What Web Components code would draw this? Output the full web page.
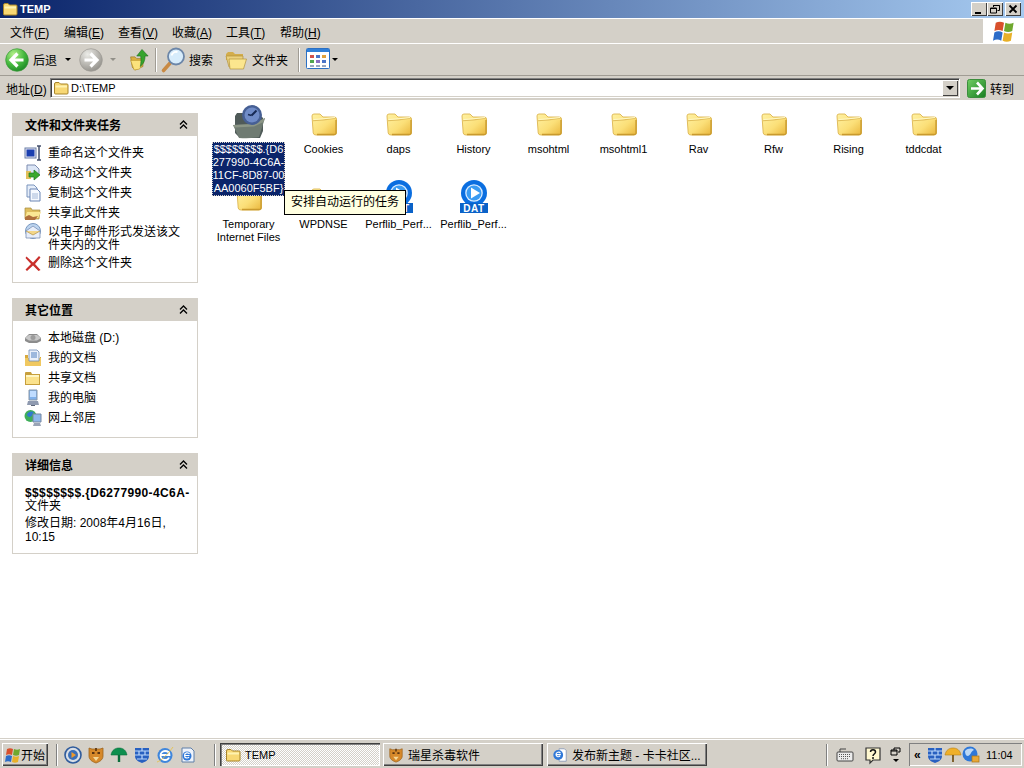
<!DOCTYPE html>
<html lang="zh">
<head>
<meta charset="utf-8">
<title>TEMP</title>
<style>
html, body { margin: 0; height: 100%; overflow: hidden; }
body { font: 12px "Liberation Sans", "Noto Sans CJK SC", sans-serif; color: #000; background: #d4d0c8; }
u { text-decoration: underline; }
</style>
</head>
<body>
<win-explorer>
  <win-titlebar slot="title">TEMP</win-titlebar>
  <win-menubar slot="menu">
    <menu-item>文件(<u>F</u>)</menu-item>
    <menu-item>编辑(<u>E</u>)</menu-item>
    <menu-item>查看(<u>V</u>)</menu-item>
    <menu-item>收藏(<u>A</u>)</menu-item>
    <menu-item>工具(<u>T</u>)</menu-item>
    <menu-item>帮助(<u>H</u>)</menu-item>
  </win-menubar>
  <win-toolbar slot="tools"></win-toolbar>
  <win-address slot="address"></win-address>
  <task-sidebar slot="side">
    <task-panel heading="文件和文件夹任务" style="height:170px">
      <task-link icon="rename">重命名这个文件夹</task-link>
      <task-link icon="move">移动这个文件夹</task-link>
      <task-link icon="copy">复制这个文件夹</task-link>
      <task-link icon="share">共享此文件夹</task-link>
      <task-link icon="mail" tall>以电子邮件形式发送该文件夹内的文件</task-link>
      <task-link icon="del">删除这个文件夹</task-link>
    </task-panel>
    <task-panel heading="其它位置" style="height:140px">
      <task-link icon="drive">本地磁盘 (D:)</task-link>
      <task-link icon="docs">我的文档</task-link>
      <task-link icon="shared">共享文档</task-link>
      <task-link icon="pc">我的电脑</task-link>
      <task-link icon="net">网上邻居</task-link>
    </task-panel>
    <task-panel heading="详细信息" style="height:101px">
      <detail-info></detail-info>
    </task-panel>
  </task-sidebar>
  <file-grid slot="files">
    <file-item icon="tasks" selected>$$$$$$$$.{D6<br>277990-4C6A-<br>11CF-8D87-00<br>AA0060F5BF}</file-item>
    <file-item icon="folder">Cookies</file-item>
    <file-item icon="folder">daps</file-item>
    <file-item icon="folder">History</file-item>
    <file-item icon="folder">msohtml</file-item>
    <file-item icon="folder">msohtml1</file-item>
    <file-item icon="folder">Rav</file-item>
    <file-item icon="folder">Rfw</file-item>
    <file-item icon="folder">Rising</file-item>
    <file-item icon="folder">tddcdat</file-item>
    <file-item icon="folder">Temporary<br>Internet Files</file-item>
    <file-item icon="folder">WPDNSE</file-item>
    <file-item icon="dat">Perflib_Perf...</file-item>
    <file-item icon="dat">Perflib_Perf...</file-item>
    <win-tooltip>安排自动运行的任务</win-tooltip>
  </file-grid>
  <win-taskbar slot="taskbar"></win-taskbar>
</win-explorer>

<script>
const FONT = '"Liberation Sans", "Noto Sans CJK SC", sans-serif';

const smallFolder = `
  <path d="M1.500 4Q1.500 2.500 3 2.500H6L7.500 4H14Q15 4 15 5V13Q15 14 14 14H2.500Q1.500 14 1.500 13z" fill="#f8d874" stroke="#a88428"/>
  <path d="M2.500 6.500H14" stroke="#fff2b0" stroke-width="2"/>`;

const ICONS = {
  folder: [32, `
    <defs><linearGradient id="f" x1="0" y1="0" x2="1" y2="1"><stop offset="0" stop-color="#fff2a4"/><stop offset=".55" stop-color="#fbdf78"/><stop offset="1" stop-color="#e9b63c"/></linearGradient></defs>
    <g transform="translate(-1 0)">
      <path d="M5 9Q5 7 7 7H13L16 10H27Q29.500 10 29.500 12V26Q29.500 28 27 28H9Q6.500 28 6.200 26z" fill="url(#f)" stroke="#dcb650" stroke-width=".9"/>
      <path d="M6 13.800Q16 13.300 28.500 11.300" fill="none" stroke="#e2bf5c" stroke-width="1.100"/>
      <path d="M6.500 12.500Q16 12 28 10.500" fill="none" stroke="#fff8c8" stroke-width="1.200"/>
      <path d="M29 13V26Q29 27.500 27 27.500H10" fill="none" stroke="#c99a2e" stroke-width="1.300"/>
    </g>`],
  tasks: [34, `
    <path d="M3 11L5 8H14L16 11H29L31 13V26L28 33H8L3 28z" fill="#4f5a58"/>
    <path d="M1 20L21 19L33 13L27 32Q18 34 7 33z" fill="#6f7b72"/>
    <path d="M1 20L21 19L33 13L31.500 17L22 21.500L2.500 22.500z" fill="#8c9686"/>
    <circle cx="20" cy="10" r="10" fill="#465f94"/><circle cx="20" cy="10" r="7.500" fill="#708cc8"/>
    <path d="M19.500 10.500L24.500 5.500" stroke="#172a54" stroke-width="2"/><path d="M19.500 10.500L16 9.500" stroke="#172a54" stroke-width="1.500"/>`],
  dat: [34, `
    <circle cx="17" cy="13" r="13" fill="#0a6ee0"/>
    <circle cx="17" cy="13" r="8.800" fill="#d8ebff"/>
    <circle cx="17" cy="13" r="7.500" fill="#3a9bf2"/>
    <path d="M14 7.500L23 13 14 18.500z" fill="#fff"/>
    <path d="M3 23H31V33H3z" fill="#0a62c8"/>
    <text x="17" y="31.700" text-anchor="middle" font-family="Liberation Sans" font-weight="700" font-size="10" letter-spacing=".5" fill="#fff">DAT</text>`],
  back: [24, `
    <defs><radialGradient id="g" cx=".35" cy=".25" r=".85"><stop offset="0" stop-color="#b4f08a"/><stop offset=".55" stop-color="#44b83e"/><stop offset="1" stop-color="#178022"/></radialGradient></defs>
    <circle cx="12" cy="12" r="11.300" fill="url(#g)" stroke="#3a9a38" stroke-width=".7"/>
    <path d="M12.500 5.500L6 12l6.500 6.500M6.500 12H18.500" fill="none" stroke="#fff" stroke-width="3.200"/>`],
  forward: [24, `
    <defs><radialGradient id="g" cx=".35" cy=".25" r=".85"><stop offset="0" stop-color="#ecece8"/><stop offset=".55" stop-color="#b8b6b0"/><stop offset="1" stop-color="#8c8a84"/></radialGradient></defs>
    <circle cx="12" cy="12" r="11.300" fill="url(#g)" stroke="#9c9a94" stroke-width=".7"/>
    <path d="M11.500 5.500L18 12l-6.500 6.500M17.500 12H5.500" fill="none" stroke="#fff" stroke-width="3.200"/>`],
  up: [24, `
    <path d="M3 9H8L10 11H17V20L8 24 5 21z" fill="#dcb040" stroke="#a07e28" stroke-width=".9"/>
    <path d="M3 13H15L18 15 13 23 7 24z" fill="#fbe27c" stroke="#b8942e" stroke-width=".7"/>
    <path d="M16 .5L23 8H19.500C19.500 13 18 17 14 20 15 16 15 12 14.500 8H10z" fill="#35a42e" stroke="#1f6f1f" stroke-width=".7"/>`],
  search: [25, `
    <path d="M2.500 23.500L10.500 14.500" stroke="#c98a44" stroke-width="3.600" stroke-linecap="round"/>
    <circle cx="15" cy="9.500" r="8" fill="#d7ecfb" stroke="#6c86a8" stroke-width="1.800"/>
    <path d="M10.500 8.500C11.500 5.500 14.500 4.500 16.500 5" fill="none" stroke="#fff" stroke-width="2"/>`],
  folders: [22, `
    <path d="M1 5L3 3H8L10 5H18V11H1z" fill="#d3ad4c"/>
    <path d="M1 7H18V18H4z" fill="#ecd27e" stroke="#b1923e" stroke-width=".7"/>
    <path d="M4 10H21.500L18.500 20H5z" fill="#fbe68e" stroke="#b1923e" stroke-width=".7"/>`],
  views: [24, `
    <rect x=".5" y=".5" width="23" height="20" rx="1" fill="#fff" stroke="#2b70c4"/>
    <path d="M1 1h22v3H1z" fill="#2f7fd8"/>
    <path d="M4 7h4v3H4z" fill="#d0524c"/><path d="M10 7h4v3h-4z" fill="#4a74c8"/><path d="M16 7h4v3h-4z" fill="#e0a23c"/>
    <path d="M4 12h4v3H4z" fill="#50a64e"/><path d="M10 12h4v3h-4z" fill="#8a6ec0"/><path d="M16 12h4v3h-4z" fill="#4a74c8"/>
    <path d="M4 17h4v2H4zM10 17h4v2h-4zM16 17h4v2h-4z" fill="#9aa8c0"/>`],
  small: [16, smallFolder],
  go: [19, `
    <defs><linearGradient id="g" x1="0" y1="0" x2="1" y2="1"><stop offset="0" stop-color="#6fce62"/><stop offset="1" stop-color="#187d22"/></linearGradient></defs>
    <rect x=".5" y=".5" width="18" height="18" rx="2" fill="url(#g)" stroke="#3b8e3c"/>
    <path d="M10 3.500L15.500 9.500 10 15.500M15 9.500H4" fill="none" stroke="#fff" stroke-width="2.600"/>`],
  rename: [18, `
    <rect x="1" y="4" width="11" height="10" fill="#e6e6f0" stroke="#6a7fa8"/><rect x="2.500" y="5.500" width="8" height="7" fill="#1a3fb0"/>
    <path d="M13 2h4M15 2v14M13 16h4" stroke="#44506c" stroke-width="1.500" fill="none"/>`],
  move: [18, `
    <path d="M3 1h8l4 4v6H3z" fill="#dce6f6" stroke="#7c8cb0"/>
    <path d="M2 7h5v8H2z" fill="#e2c05c"/>
    <path d="M10 6l6 5-6 5v-3H5v-4h5z" fill="#3aa82e" stroke="#1e7a20" stroke-width=".7"/>`],
  copy: [18, `
    <path d="M3 1h7l3 3v9H3z" fill="#e6eef9" stroke="#7b94bd"/>
    <path d="M6 5h7l3 3v9H6z" fill="#f6f9ff" stroke="#6a85b4"/>
    <path d="M8 10h6M8 12h6M8 14h6" stroke="#a4b8d8"/>`],
  share: [18, `
    <path d="M1 4h6l1 2h8l-1 9H1z" fill="#e0bf60" stroke="#a58b3c" stroke-width=".7"/>
    <path d="M3 8h14l-3 6H1z" fill="#fbe894"/>
    <path d="M1 13l4-2 4 2 5-1-3 4H1z" fill="#b0703c"/>`],
  mail: [18, `
    <circle cx="9" cy="8" r="7.500" fill="#bcd4ef" stroke="#7a98c0"/>
    <path d="M2 8l7-5 7 5v7H2z" fill="#e8eefa" stroke="#7b8fb4" stroke-width=".8"/>
    <path d="M2 8l7 4 7-4" fill="#f3d689" stroke="#b89a50" stroke-width=".8"/>`],
  del: [18, `
    <path d="M2.500 2.500L9 8.500l6-6.500 1.500 1.500L11 10l5.500 6-2 1L9 11.500 3 17l-1.500-1.500L7 10 1.500 4z" fill="#c9302c"/>`],
  drive: [18, `
    <path d="M1 9l4-4h8l4 4v3l-4 2H5l-4-2z" fill="#8c8c8c"/>
    <path d="M1 9l4-3h8l4 3-4 2.500H5z" fill="#c8c8c8"/>
    <circle cx="9" cy="8.500" r="2.500" fill="#9c9c9c"/>`],
  docs: [18, `
    <path d="M1 6h3v10h12V8h1v9H1z" fill="#d7a93e"/>
    <path d="M1 9h16v8H1z" fill="#f0c860"/>
    <path d="M5 1h8l2 2v9H5z" fill="#eaf0fa" stroke="#6f8bb4" stroke-width=".8"/>
    <path d="M7 4h6M7 6h6M7 8h6" stroke="#5080c0"/>`],
  shared: [18, `
    <path d="M1 4Q1 3 2 3h5l1 2h8v11H1z" fill="#c79f3c"/>
    <path d="M2 6h13v9H2z" fill="#fbe28c"/><path d="M2 6h13v2H2z" fill="#fff6c4"/>`],
  pc: [18, `
    <path d="M5 1h8v10H5z" fill="#7fb0ea" stroke="#8897a8"/>
    <path d="M6 2h6v6H6z" fill="#bfdcff"/>
    <path d="M4 12h10l1 4H3z" fill="#8f9ab0"/>
    <path d="M7 16h4v1H7z" fill="#5c667a"/>`],
  net: [18, `
    <circle cx="6.500" cy="7" r="6" fill="#3fae5a"/><path d="M3 5c2-3 5-3 7-2-2 1-1 4-4 5-2 0-3-1-3-3z" fill="#2f7ad0"/>
    <path d="M9 5h8v8H9z" fill="#8db8ea" stroke="#7486a0"/><path d="M10 14h6l1 3H9z" fill="#9aa4b6"/>`],
  start: [16, `
    <path d="M2 2c2-1 4-1 6 0L7 8C5 7 3 7 1 8z" fill="#d8502c"/>
    <path d="M9 2c2 1 4 1 6 0l-1 6c-2 1-4 1-6 0z" fill="#6fa82e"/>
    <path d="M1 9c2-1 4-1 6 0l-1 6c-2-1-4-1-6 0z" fill="#2c6cc8"/>
    <path d="M8 9c2 1 4 1 6 0l-1 6c-2 1-4 1-6 0z" fill="#e8b028"/>`],
  media: [18, `
    <circle cx="9" cy="9" r="8" fill="#d8dee6" stroke="#2f5b9c" stroke-width="1.600"/>
    <circle cx="9" cy="9" r="5" fill="#3b6fb8"/><path d="M7.500 6l4.500 3-4.500 3z" fill="#f09a2a"/>`],
  tiger: [18, `
    <path d="M2 2l3 1h8l3-1v8c0 4-4 6-7 7-3-1-7-3-7-7z" fill="#d6892a" stroke="#9c6420" stroke-width=".8"/>
    <path d="M5 6h2.500v2H5zM10.500 6H13v2h-2.500z" fill="#5a3410"/>
    <path d="M6 11h6l-3 4z" fill="#f5d898"/><path d="M8 2h2v3H8z" fill="#6c4216"/>`],
  umbrella: [18, `
    <path d="M1 9C2 4 5 2 9 2s7 2 8 7H1z" fill="#0d8f4e" stroke="#0a6e3c" stroke-width=".6"/>
    <path d="M9 9v7" stroke="#0a6e3c" stroke-width="2.400"/>`],
  yellowbrella: [18, `
    <path d="M1 9C2 4 5 2 9 2s7 2 8 7H1z" fill="#efb02a" stroke="#b57f16" stroke-width=".6"/>
    <path d="M9 9v7" stroke="#76561c" stroke-width="1.800"/>`],
  shield: [18, `
    <path d="M2 2h14v8c0 4-4 6-7 7-3-1-7-3-7-7z" fill="#2860c0"/>
    <path d="M2 5h14M2 9h14M4 13h10M9 2v3M6 5v4M12 5v4M9 9v4" stroke="#bcd8fa" stroke-width="1.200"/>`],
  ie: [18, `
    <circle cx="9" cy="9.500" r="7.500" fill="#3f86dc"/>
    <path d="M4.500 9h9c0-2.500-2-4-4.500-4S4.500 7 4.500 9.500 6.500 14 9 14c2 0 3.500-1 4-2.500" fill="none" stroke="#fff" stroke-width="1.800"/>
    <path d="M1 16c4-1 11-8 16-15" fill="none" stroke="#e8c03c" stroke-width=".8"/>`],
  iedoc: [18, `
    <path d="M3 2h9l3 3v11H3z" fill="#eef3fb" stroke="#5f7ea8"/>
    <circle cx="8" cy="10" r="4.500" fill="#2f78d8"/><path d="M5.500 9.500h5M10.500 8c-1-2-5-1.500-5 1.500s3.500 3 4.500 1.500" fill="none" stroke="#fff" stroke-width="1.200"/>`],
  iepage: [18, `
    <path d="M8 2h6l2 2v12H8z" fill="#fff" stroke="#8a9ab4"/>
    <circle cx="7" cy="9" r="5.500" fill="#2f78d8"/><path d="M4 8.500h6M9.500 7c-1-2-5-1.500-5 1.500s3.500 3 4.500 1.500" fill="none" stroke="#fff" stroke-width="1.300"/>`],
  keyboard: [18, `
    <path d="M4 6V3h6" fill="none" stroke="#444"/>
    <rect x="1" y="6" width="16" height="9" rx="1" fill="#ececec" stroke="#444"/>
    <path d="M3 8.500h12M3 10.500h12M5 12.700h8" stroke="#555" stroke-dasharray="1 1"/>`],
  help: [18, `
    <path d="M2 2h14v12H9l-3 3v-3H2z" fill="#fff8d0" stroke="#333" stroke-width="1.200"/>
    <path d="M6.500 6c0-3 5-3 5 0 0 2-2.500 2-2.500 4M9 11v2" fill="none" stroke="#111" stroke-width="1.500"/>`],
  globelock: [18, `
    <circle cx="8" cy="8" r="7.500" fill="#2f78d8"/><path d="M3 5c3-3 7-3 9-1-3 1-3 5-6 6-2 0-3-2-3-5z" fill="#bcd8f5"/>
    <rect x="10" y="10" width="7" height="6" fill="#e8a838" stroke="#a87416" stroke-width=".7"/>`]
};

class XpIcon extends HTMLElement {
  constructor() {
    super();
    this.shadow = this.attachShadow({ mode: 'open' });
  }
  connectedCallback() {
    const [box, body] = ICONS[this.getAttribute('name')];
    const size = this.getAttribute('size') || box;
    this.shadow.innerHTML = `
      <style>:host { display: inline-block; width: ${size}px; height: ${size}px; flex: none; line-height: 0; } svg { overflow: visible; }</style>
      <svg width="${size}" height="${size}" viewBox="0 0 ${box} ${box}">${body}</svg>`;
  }
}

class WinExplorer extends HTMLElement {
  constructor() {
    super();
    this.shadow = this.attachShadow({ mode: 'open' });
    this.shadow.innerHTML = `
      <style>
      :host { display: flex; flex-direction: column; height: 768px; width: 1024px; }
      .main { flex: 1; min-height: 0; display: flex; background: #fff; position: relative; overflow: hidden; }
      </style>
      <slot name="title"></slot>
      <slot name="menu"></slot>
      <slot name="tools"></slot>
      <slot name="address"></slot>
      <div class="main"><slot name="side"></slot><slot name="files"></slot></div>
      <slot name="taskbar"></slot>`;
  }
}

class WinTitlebar extends HTMLElement {
  constructor() {
    super();
    this.shadow = this.attachShadow({ mode: 'open' });
    this.shadow.innerHTML = `
      <style>
      :host { display: flex; align-items: center; height: 18px; padding: 0 3px 0 2px;
        background: linear-gradient(90deg, #0a246a, #a6caf0); color: #fff; font: bold 11px ${FONT}; }
      .name { flex: 1; margin-left: 2px; }
      .btn { width: 16px; height: 14px; box-sizing: border-box; background: #d4d0c8; color: #000; line-height: 0;
        box-shadow: inset 1px 1px #fff, inset -1px -1px #404040; }
      .gap { margin-left: 2px; }
      svg { display: block; }
      </style>
      <xp-icon name="small"></xp-icon>
      <span class="name"><slot></slot></span>
      <div class="btn"><svg width="16" height="14"><path d="M4 10h6v2H4z"/></svg></div>
      <div class="btn"><svg width="16" height="14"><path d="M6.500 5V3.500h6v5H10.500M6 3.500h6.500M3.500 6h6v5h-6zM3.500 6.500h6" fill="none" stroke="#000"/></svg></div>
      <div class="btn gap"><svg width="16" height="14"><path d="M4.500 3.500l7 7M11.500 3.500l-7 7" stroke="#000" stroke-width="1.800"/></svg></div>`;
  }
}

class WinMenubar extends HTMLElement {
  constructor() {
    super();
    this.shadow = this.attachShadow({ mode: 'open' });
    this.shadow.innerHTML = `
      <style>
      :host { display: flex; height: 26px; box-sizing: border-box; border-top: 1px solid #fff; border-bottom: 1px solid #fff; }
      .items { flex: 1; display: flex; padding-left: 1px; align-items: center; }
      .flag { width: 41px; background: #fff; display: flex; align-items: center; justify-content: center; }
      </style>
      <div class="items"><slot></slot></div>
      <div class="flag"><xp-icon name="start" size="22"></xp-icon></div>`;
  }
}

class MenuItem extends HTMLElement {
  constructor() {
    super();
    this.shadow = this.attachShadow({ mode: 'open' });
    this.shadow.innerHTML = `<style>:host { display: block; width: 54px; padding-left: 9px; box-sizing: border-box; white-space: nowrap; font-size: 12px; }</style><slot></slot>`;
  }
}

class WinToolbar extends HTMLElement {
  constructor() {
    super();
    this.shadow = this.attachShadow({ mode: 'open' });
    this.shadow.innerHTML = `
      <style>
      :host { display: flex; align-items: center; height: 32px; box-sizing: border-box; padding-left: 5px; font-size: 12px; border-bottom: 1px solid #a09c94; }
      .label { margin-left: 4px; }
      .arrow { width: 0; height: 0; border: 3px solid transparent; border-top: 3px solid #000; border-bottom: 0; margin-left: 8px; }
      .arrow.off { border-top-color: #918f88; margin-left: 7px; }
      .sep { width: 1px; height: 24px; background: #a09c94; box-shadow: 1px 0 #fff; }
      .g { display: flex; align-items: center; }
      </style>
      <div class="g"><xp-icon name="back"></xp-icon><span class="label">后退</span><i class="arrow"></i></div>
      <div class="g" style="margin-left:8px"><xp-icon name="forward"></xp-icon><i class="arrow off"></i></div>
      <div class="g" style="margin-left:12px"><xp-icon name="up" size="21"></xp-icon></div>
      <i class="sep" style="margin-left:6px"></i>
      <div class="g" style="margin-left:5px"><xp-icon name="search"></xp-icon><span class="label" style="margin-left:3px">搜索</span></div>
      <div class="g" style="margin-left:12px"><xp-icon name="folders"></xp-icon><span class="label" style="margin-left:5px">文件夹</span></div>
      <i class="sep" style="margin-left:10px"></i>
      <div class="g" style="margin-left:7px"><xp-icon name="views"></xp-icon><i class="arrow" style="margin-left:2px"></i></div>`;
  }
}

class WinAddress extends HTMLElement {
  constructor() {
    super();
    this.shadow = this.attachShadow({ mode: 'open' });
    this.shadow.innerHTML = `
      <style>
      :host { display: flex; align-items: center; height: 24px; padding-left: 6px; font-size: 12px; }
      .lab { width: 44px; white-space: nowrap; }
      u { text-decoration: underline; }
      .box { width: 910px; height: 20px; box-sizing: border-box; background: #fff; display: flex; align-items: center; padding-left: 2px;
        border: 1px solid; border-color: #808080 #fff #fff #808080; box-shadow: inset 1px 1px #404040, inset -1px -1px #d4d0c8; font-size: 11px; position: relative; }
      .box span { margin-left: 2px; }
      .drop { position: absolute; right: 1px; top: 1px; width: 16px; height: 16px; background: #d4d0c8; box-shadow: inset 1px 1px #fff, inset -1px -1px #404040; display: flex; align-items: center; justify-content: center; }
      .drop i { border: 4px solid transparent; border-top: 4px solid #000; border-bottom: 0; }
      .go { display: flex; align-items: center; margin-left: 7px; gap: 4px; }
      </style>
      <span class="lab">地址(<u>D</u>)</span>
      <div class="box"><xp-icon name="small"></xp-icon><span>D:\\TEMP</span><div class="drop"><i></i></div></div>
      <div class="go"><xp-icon name="go"></xp-icon><span>转到</span></div>`;
  }
}

class TaskSidebar extends HTMLElement {
  constructor() {
    super();
    this.shadow = this.attachShadow({ mode: 'open' });
    this.shadow.innerHTML = `
      <style>:host { display: flex; flex-direction: column; gap: 15px; width: 186px; flex: none; padding: 13px 13px 0 12px; background: #fff; }</style>
      <slot></slot>`;
  }
}

class TaskPanel extends HTMLElement {
  constructor() {
    super();
    this.shadow = this.attachShadow({ mode: 'open' });
  }
  connectedCallback() {
    this.shadow.innerHTML = `
      <style>
      :host { display: flex; flex-direction: column; box-sizing: border-box; }
      .head { height: 23px; flex: none; display: flex; align-items: center; justify-content: space-between; background: #d4d0c8; padding: 0 10px 0 13px; font-weight: bold; font-size: 12px; }
      .body { flex: 1; border: 1px solid #d4d0c8; border-top: 0; padding: 7px 0 0 11px; overflow: hidden; background: #fff; }
      svg { display: block; }
      </style>
      <div class="head"><span>${this.getAttribute('heading')}</span>
        <svg width="9" height="9" viewBox="0 0 9 9"><path d="M1 4.500L4.500 1 8 4.500M1 8.500L4.500 5 8 8.500" fill="none" stroke="#000" stroke-width="1.300"/></svg>
      </div>
      <div class="body"><slot></slot></div>`;
  }
}

class TaskLink extends HTMLElement {
  constructor() {
    super();
    this.shadow = this.attachShadow({ mode: 'open' });
  }
  connectedCallback() {
    const tall = this.hasAttribute('tall');
    this.shadow.innerHTML = `
      <style>
      :host { display: flex; gap: 6px; height: ${tall ? 30 : 20}px; align-items: ${tall ? 'flex-start' : 'center'}; font-size: 12px; line-height: 13px; }
      .t { width: 137px; ${tall ? 'padding-top: 3px;' : ''} }
      </style>
      <xp-icon name="${this.getAttribute('icon')}"></xp-icon>
      <span class="t"><slot></slot></span>`;
  }
}

class DetailInfo extends HTMLElement {
  constructor() {
    super();
    this.shadow = this.attachShadow({ mode: 'open' });
    this.shadow.innerHTML = `
      <style>
      :host { display: block; margin: 4px 0 0 1px; font-size: 12px; line-height: 13px; }
      .n { font-weight: bold; white-space: nowrap; letter-spacing: .38px; }
      .d { margin-top: 3px; width: 150px; line-height: 14px; }
      </style>
      <div class="n">$$$$$$$$.{D6277990-4C6A-</div>
      <div>文件夹</div>
      <div class="d">修改日期: 2008年4月16日, 10:15</div>`;
  }
}

class FileGrid extends HTMLElement {
  constructor() {
    super();
    this.shadow = this.attachShadow({ mode: 'open' });
    this.shadow.innerHTML = `
      <style>:host { flex: 1; display: grid; grid-template-columns: repeat(10, 75px); grid-auto-rows: 75px; align-content: start; padding-top: 5px; }</style>
      <slot></slot>`;
  }
}

class FileItem extends HTMLElement {
  constructor() {
    super();
    this.shadow = this.attachShadow({ mode: 'open' });
  }
  connectedCallback() {
    const selected = this.hasAttribute('selected');
    this.shadow.innerHTML = `
      <style>
      :host { display: flex; flex-direction: column; align-items: center; font-size: 11px; line-height: 13px; text-align: center; ${selected ? 'position: relative; z-index: 2;' : ''} }
      .ic { margin-top: 2px; height: 32px; display: flex; align-items: flex-end; }
      .lab { margin-top: 4px; white-space: nowrap; }
      :host([selected]) .lab { margin-top: 3px; background: #0a246a; color: #fff; outline: 1px dotted #d4d0c8; outline-offset: -1px; padding: 1px; }
      </style>
      <div class="ic"><xp-icon name="${this.getAttribute('icon')}"></xp-icon></div>
      <div class="lab"><slot></slot></div>`;
  }
}

class WinTooltip extends HTMLElement {
  constructor() {
    super();
    this.shadow = this.attachShadow({ mode: 'open' });
    this.shadow.innerHTML = `
      <style>:host { position: absolute; left: 284px; top: 90px; z-index: 3; height: 25px; width: 122px; box-sizing: border-box; border: 1px solid #000; background: #ffffe1; font-size: 12px; line-height: 23px; text-align: center; white-space: nowrap; }</style>
      <slot></slot>`;
  }
}

class WinTaskbar extends HTMLElement {
  constructor() {
    super();
    this.shadow = this.attachShadow({ mode: 'open' });
    const quick = ['media', 'tiger', 'umbrella', 'shield', 'ie', 'iedoc'].map(n => `<xp-icon name="${n}"></xp-icon>`).join('');
    this.shadow.innerHTML = `
      <style>
      :host { display: flex; align-items: center; height: 30px; box-sizing: border-box; background: #d4d0c8; border-top: 1px solid #d4d0c8; box-shadow: inset 0 1px #fff; font-size: 12px; padding: 2px 2px 0; }
      .raised { box-shadow: inset 1px 1px #fff, inset -1px -1px #404040, inset -2px -2px #808080; height: 23px; display: flex; align-items: center; box-sizing: border-box; flex: none; }
      .start { width: 46px; padding-left: 3px; white-space: nowrap; }
      .sep { width: 2px; height: 22px; box-shadow: inset 1px 0 #808080, inset -1px 0 #fff; flex: none; }
      .quick { display: flex; align-items: center; gap: 5px; width: 150px; flex: none; }
      .task { width: 160px; padding-left: 5px; gap: 4px; white-space: nowrap; overflow: hidden; }
      .task.on { background: repeating-conic-gradient(#fff 0 25%, #d4d0c8 0 50%) 0 0/2px 2px; box-shadow: inset 1px 1px #404040, inset 2px 2px #808080, inset -1px -1px #fff; font-size: 11px; }
      .tray-tools { display: flex; align-items: center; gap: 10px; margin-left: 8px; }
      .restore { display: flex; flex-direction: column; align-items: center; gap: 3px; margin-left: 8px; }
      .restore i { border: 3px solid transparent; border-top: 3px solid #000; border-bottom: 0; }
      svg { display: block; }
      .tray { width: 113px; height: 23px; box-sizing: border-box; margin-left: 8px; display: flex; align-items: center; padding-left: 5px; flex: none;
        box-shadow: inset 1px 1px #808080, inset -1px -1px #fff; }
      .more { font: bold 12px ${FONT}; width: 12px; }
      .clock { margin-left: 6px; font-size: 11px; }
      </style>
      <div class="raised start"><xp-icon name="start"></xp-icon><span>开始</span></div>
      <i class="sep" style="margin:0 6px 0 8px"></i>
      <div class="quick">${quick}</div>
      <i class="sep" style="margin-right:4px"></i>
      <div class="raised task on"><xp-icon name="small"></xp-icon><span>TEMP</span></div>
      <div class="raised task" style="margin-left:3px"><xp-icon name="tiger" size="16"></xp-icon><span>瑞星杀毒软件</span></div>
      <div class="raised task" style="margin-left:4px"><xp-icon name="iepage" size="16"></xp-icon><span>发布新主题 - 卡卡社区...</span></div>
      <i class="sep" style="margin-left:auto"></i>
      <div class="tray-tools"><xp-icon name="keyboard"></xp-icon><xp-icon name="help"></xp-icon></div>
      <div class="restore"><svg width="11" height="9"><path d="M4 1h6v4H8M1 3h6v5H1zM1 4h6M4 1v2" fill="none" stroke="#000"/></svg><i></i></div>
      <div class="tray"><span class="more">«</span><xp-icon name="shield"></xp-icon><xp-icon name="yellowbrella"></xp-icon><xp-icon name="globelock"></xp-icon><span class="clock">11:04</span></div>`;
  }
}

customElements.define('xp-icon', XpIcon);
customElements.define('win-explorer', WinExplorer);
customElements.define('win-titlebar', WinTitlebar);
customElements.define('win-menubar', WinMenubar);
customElements.define('menu-item', MenuItem);
customElements.define('win-toolbar', WinToolbar);
customElements.define('win-address', WinAddress);
customElements.define('task-sidebar', TaskSidebar);
customElements.define('task-panel', TaskPanel);
customElements.define('task-link', TaskLink);
customElements.define('detail-info', DetailInfo);
customElements.define('file-grid', FileGrid);
customElements.define('file-item', FileItem);
customElements.define('win-tooltip', WinTooltip);
customElements.define('win-taskbar', WinTaskbar);
</script>
</body>
</html>
